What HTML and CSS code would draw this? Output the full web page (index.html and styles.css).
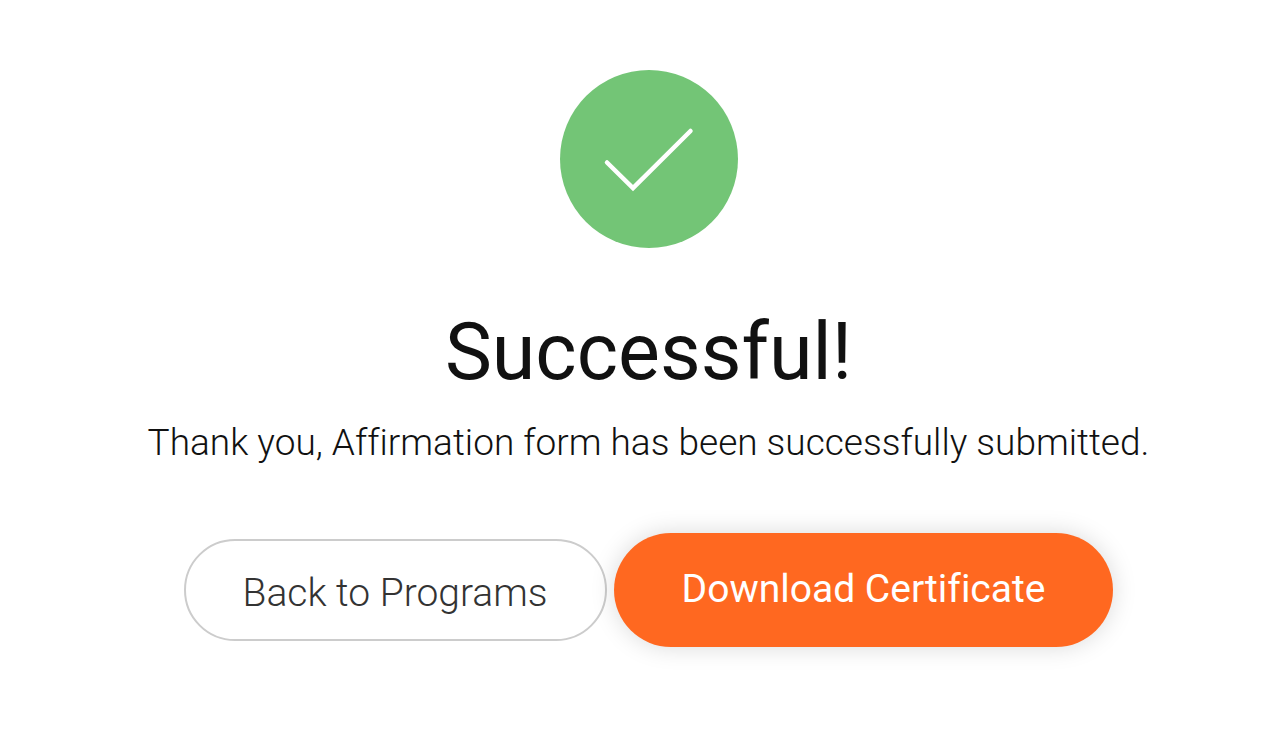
FILE: index.html
```html
<!DOCTYPE html>
<html lang="en">

<head>
    <meta charset="UTF-8">
    <meta name="viewport" content="width=device-width, initial-scale=1.0">
    <title>Successful</title>
    <link rel="stylesheet" href="styles.css">
</head>

<body>
    <main class="success-box">
        <svg class="success-icon" viewBox="0 0 178 178" aria-hidden="true">
            <circle cx="89" cy="89" r="89" fill="#73c576" />
            <path d="M47 92.500L73 118L130.500 61" fill="none" stroke="#fff" stroke-width="4.500" stroke-linecap="round" />
        </svg>
        <h1>Successful!</h1>
        <p class="message">Thank you, Affirmation form has been successfully submitted.</p>
        <div class="button-row">
            <button type="button" class="back-button">Back to Programs</button>
            <button type="button" class="download-button">Download Certificate</button>
        </div>
    </main>
</body>

</html>
```
FILE: styles.css
```css
body {
    margin: 0;
    font-family: Roboto, sans-serif;
    background-color: #fff;
    color: #111;
}

.success-box {
    display: flex;
    flex-direction: column;
    align-items: center;
    padding: 70px 16px 100px 33px;
    text-align: center;
}

.success-icon {
    width: 178px;
    height: 178px;
}

h1 {
    margin: 56px 0 0;
    font-size: 79px;
    font-weight: 400;
    line-height: 96px;
}

.message {
    margin: 17px 0 0;
    font-size: 37px;
    font-weight: 300;
    line-height: 52px;
}

.message,
button {
    font-variant-ligatures: none;
}

.button-row {
    display: flex;
    flex-wrap: wrap;
    justify-content: center;
    align-items: center;
    gap: 7px;
    margin-top: 64px;
}

button {
    font-family: inherit;
    font-size: 39px;
    line-height: 48px;
    cursor: pointer;
}

.back-button {
    padding: 28px 57px 22px;
    border: 2px solid #ccc;
    border-radius: 52px;
    background-color: #fff;
    color: #333;
    font-weight: 300;
}

.download-button {
    padding: 32px 68px 34px;
    border: none;
    border-radius: 57px;
    background-color: #ff6820;
    color: #fff;
    font-weight: 400;
    box-shadow: 0 0 24px rgba(0, 0, 0, 0.15);
}
```
